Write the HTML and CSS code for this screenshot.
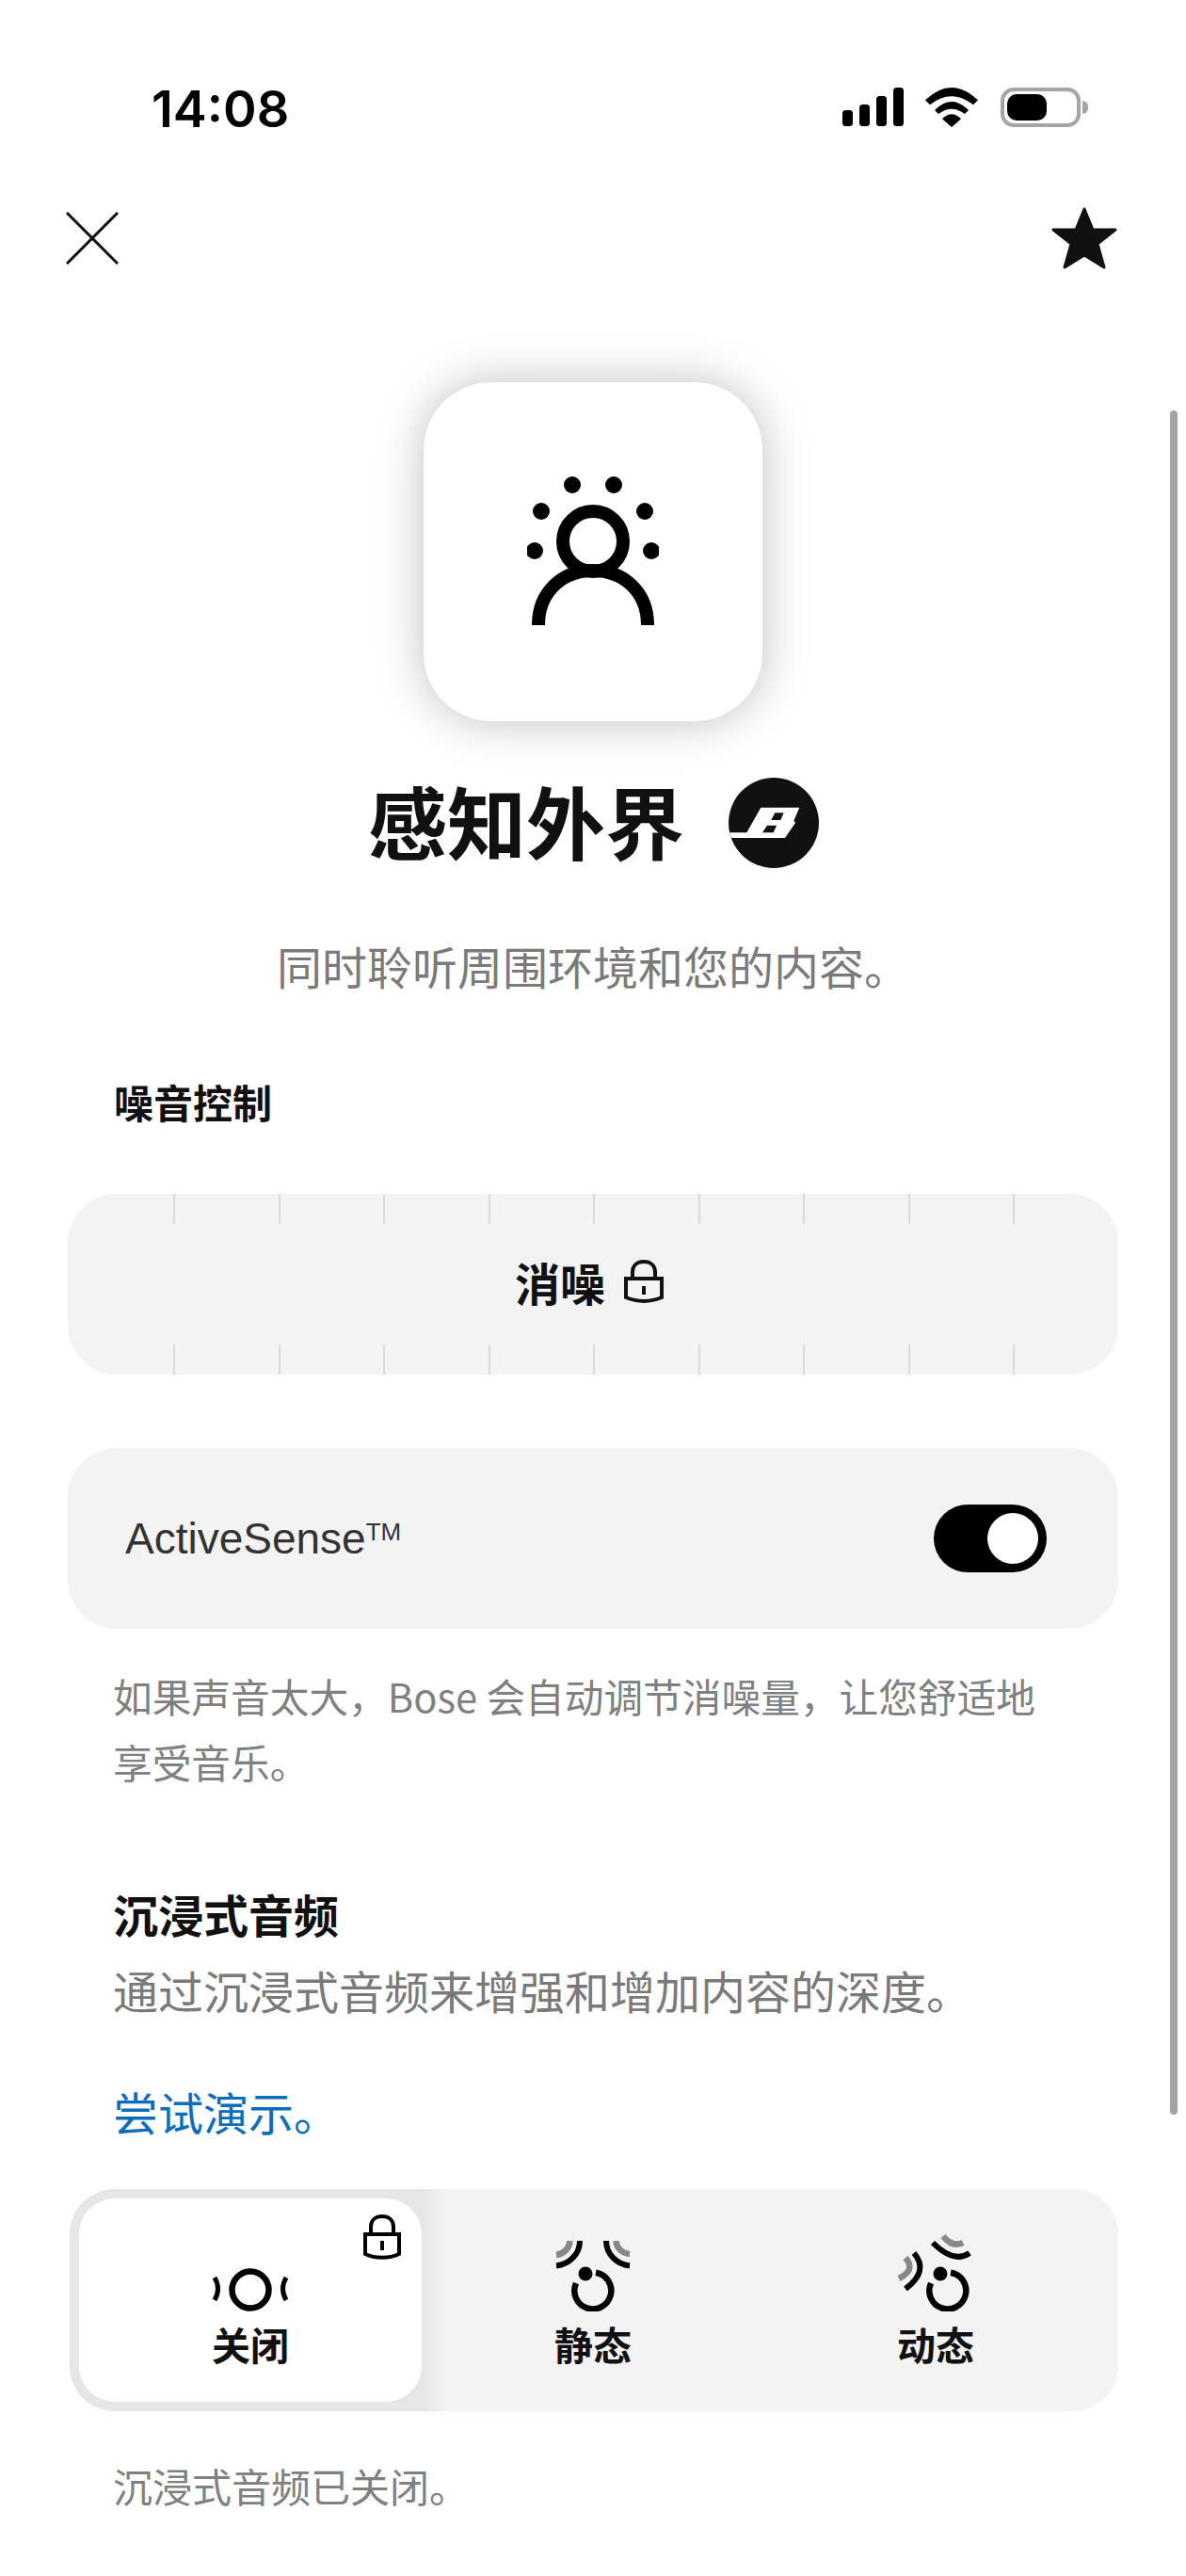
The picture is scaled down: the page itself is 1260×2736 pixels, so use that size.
FILE: index.html
```html
<!DOCTYPE html>
<html lang="zh-CN">
<head>
  <meta charset="UTF-8">
  <meta name="viewport" content="width=device-width, initial-scale=1.0">
  <title>感知外界</title>
  <link rel="stylesheet" href="styles.css">
</head>
<body>
  <div class="screen">
    <div class="status-bar">
      <span class="time">14:08</span>
      <div class="status-icons">
        <svg class="signal" width="65" height="42" viewBox="0 0 65 42">
          <rect x="0" y="24" width="11" height="17" rx="3.5"/>
          <rect x="18" y="18" width="11" height="23" rx="3.5"/>
          <rect x="36" y="9" width="11" height="32" rx="3.5"/>
          <rect x="54" y="0" width="11" height="41" rx="3.5"/>
        </svg>
        <svg class="wifi" width="56" height="42" viewBox="0 0 56 42">
          <path d="M0 13.3 Q28 -13.3 56 13.3 L51 18.3 Q28 0.3 5 18.3 Z"/>
          <path d="M10 24 Q28 6 46 24 L42 28 Q28 17.4 14 28 Z"/>
          <path d="M18 33.3 Q28 23.3 38 33.3 L28 42 Z"/>
        </svg>
        <div class="battery"><div class="battery-fill"></div></div>
        <div class="battery-nub"></div>
      </div>
    </div>

    <div class="nav">
      <svg width="56" height="56" viewBox="0 0 56 56">
        <path d="M1 1 L55 55 M55 1 L1 55" stroke="#111" stroke-width="3" fill="none"/>
      </svg>
      <svg width="70" height="66" viewBox="0 0 70 66">
        <path d="M35 2 L44 24 L68 24 L49 39 L56 64 L35 51 L14 64 L21 39 L2 24 L26 24 Z" fill="#111" stroke="#111" stroke-width="3" stroke-linejoin="round"/>
      </svg>
    </div>

    <div class="tile">
      <svg width="140" height="170" viewBox="0 0 140 170">
        <circle cx="48" cy="9" r="9"/>
        <circle cx="92" cy="9" r="9"/>
        <circle cx="15" cy="37" r="9"/>
        <circle cx="125" cy="37" r="9"/>
        <circle cx="8" cy="79" r="9"/>
        <circle cx="132" cy="79" r="9"/>
        <circle cx="70" cy="69" r="32" fill="none" stroke="#000" stroke-width="14"/>
        <path d="M12 158 C12 122 38 100 70 100 C102 100 128 122 128 158" fill="none" stroke="#000" stroke-width="14"/>
      </svg>
    </div>

    <div class="title-row">
      <h1>感知外界</h1>
      <svg class="bose-logo" width="96" height="96" viewBox="0 0 96 96">
        <circle cx="48" cy="48" r="48" fill="#111"/>
        <path d="M34.3 31.7 L75.3 31.7 L69.3 45.7 L71 48 L60 64 L3 64 L1 58.3 L19.3 58.3 Z M49.3 37.3 L45.3 45 L55.3 45 L58.7 37.3 Z M41 50.7 L36 58.3 L47.7 58.3 L51 50.7 Z" fill="#fff" fill-rule="evenodd"/>
      </svg>
    </div>
    <p class="subtitle">同时聆听周围环境和您的内容。</p>

    <h2 class="section-label">噪音控制</h2>
    <div class="panel noise-panel">
      <div class="ticks">
        <i></i><i></i><i></i><i></i><i></i><i></i><i></i><i></i><i></i>
      </div>
      <div class="noise-name">
        <span>消噪</span>
        <svg class="lock" width="42" height="46" viewBox="0 0 42 46">
          <path d="M9 20 V13 C9 6 14 2 21 2 C28 2 33 6 33 13 V20" fill="none" stroke="#111" stroke-width="4"/>
          <path d="M2 20 H40 V40 C28 45 14 45 2 40 Z" fill="none" stroke="#111" stroke-width="4"/>
          <rect x="19" y="28" width="4" height="9" fill="#111"/>
        </svg>
      </div>
      <div class="ticks">
        <i></i><i></i><i></i><i></i><i></i><i></i><i></i><i></i><i></i>
      </div>
    </div>

    <div class="panel sense-panel">
      <span class="sense-name">ActiveSense<sup>TM</sup></span>
      <div class="toggle"><div class="knob"></div></div>
    </div>
    <p class="note sense-note">如果声音太大，Bose 会自动调节消噪量，让您舒适地享受音乐。</p>

    <h3 class="audio-title">沉浸式音频</h3>
    <p class="audio-desc">通过沉浸式音频来增强和增加内容的深度。</p>
    <a class="demo-link">尝试演示。</a>

    <div class="segment">
      <div class="seg-item active">
        <svg class="lock seg-lock" width="40" height="48" viewBox="0 0 40 48">
          <path d="M8 20 V13 C8 6 13 2 20 2 C27 2 32 6 32 13 V20" fill="none" stroke="#000" stroke-width="4"/>
          <path d="M2 21 H38 V42 C28 47 12 47 2 42 Z" fill="none" stroke="#000" stroke-width="4"/>
          <rect x="18" y="28" width="4" height="10" fill="#000"/>
        </svg>
        <svg class="seg-icon" width="82" height="46" viewBox="0 0 82 46">
          <circle cx="41" cy="23" r="19.5" fill="none" stroke="#000" stroke-width="6.5"/>
          <path d="M3 10 Q10 22 3 34 M79 10 Q72 22 79 34" fill="none" stroke="#000" stroke-width="5"/>
        </svg>
        <span>关闭</span>
      </div>
      <div class="seg-item">
        <svg class="seg-icon" width="82" height="75" viewBox="0 0 82 75">
          <path d="M2 15 C10 14 16 8 16.5 0" fill="none" stroke="#888" stroke-width="6.5"/>
          <path d="M2 26.5 C16 25 27 14 27 0" fill="none" stroke="#000" stroke-width="6"/>
          <path d="M80 14 C72 13 66 8 65.5 0" fill="none" stroke="#888" stroke-width="6.5"/>
          <path d="M80 26.5 C66 25 55 14 55 0" fill="none" stroke="#000" stroke-width="6"/>
          <circle cx="33" cy="35" r="7.5"/>
          <path d="M44 33.7 A19.5 19.5 0 1 1 23 45" fill="none" stroke="#000" stroke-width="6.5"/>
        </svg>
        <span>静态</span>
      </div>
      <div class="seg-item">
        <svg class="seg-icon" width="82" height="82" viewBox="0 0 82 82">
          <path d="M49 2 Q58.5 14.5 70 9" fill="none" stroke="#888" stroke-width="6.5"/>
          <path d="M38 9 Q60.5 31.5 77 20" fill="none" stroke="#000" stroke-width="6"/>
          <path d="M9 25 Q20.5 38 2 47" fill="none" stroke="#888" stroke-width="6.5"/>
          <path d="M18 20 Q34.5 39 9 58" fill="none" stroke="#000" stroke-width="6"/>
          <circle cx="46" cy="42" r="7.5"/>
          <path d="M57 40.7 A19.5 19.5 0 1 1 36 52" fill="none" stroke="#000" stroke-width="6.5"/>
        </svg>
        <span>动态</span>
      </div>
    </div>
    <p class="note off-note">沉浸式音频已关闭。</p>

    <div class="scrollbar"></div>
  </div>
</body>
</html>
```

FILE: styles.css
```css
* {
  box-sizing: border-box;
}
html, body {
  margin: 0;
  padding: 0;
  background-color: #ffffff;
}
body {
  font-family: "Liberation Sans", "Noto Sans CJK SC", sans-serif;
  color: #111111;
}
h1, h2, h3, p {
  margin: 0;
  font-family: "Noto Sans CJK SC", sans-serif;
}
.screen {
  position: relative;
  width: 1260px;
  height: 2736px;
  overflow: hidden;
  background-color: #ffffff;
}

/* status bar */
.status-bar {
  display: flex;
  justify-content: space-between;
  align-items: center;
  height: 42px;
  margin-top: 93px;
  padding: 0 104px 0 161px;
}
.time {
  padding-top: 3px;
  font-family: "Inter", sans-serif;
  font-size: 54px;
  font-weight: 600;
  line-height: 42px;
  color: #000;
}
.status-icons {
  display: flex;
  align-items: center;
}
.wifi {
  margin-left: 23px;
}
.battery {
  width: 85px;
  height: 42px;
  margin-left: 24px;
  padding: 3px;
  border: 4px solid #a5a5a5;
  border-radius: 14px;
}
.battery-fill {
  width: 42px;
  height: 100%;
  background-color: #000;
  border-radius: 10px;
}
.battery-nub {
  width: 6px;
  height: 14px;
  margin-left: 2px;
  background-color: #a5a5a5;
  border-radius: 0 7px 7px 0;
}

/* close / favourite */
.nav {
  display: flex;
  justify-content: space-between;
  align-items: center;
  margin-top: 85px;
  padding: 0 73px 0 70px;
}

/* mode tile */
.tile {
  display: flex;
  align-items: center;
  justify-content: center;
  width: 360px;
  height: 360px;
  margin: 120px auto 0 450px;
  background-color: #fff;
  border-radius: 72px;
  box-shadow: 0 0 50px rgba(0, 0, 0, 0.25);
}
.tile svg {
  margin-top: 10px;
}
.title-row {
  display: flex;
  align-items: center;
  height: 96px;
  margin-top: 57px;
  padding-left: 391px;
}
h1 {
  font-size: 84px;
  font-weight: 700;
  line-height: 96px;
  color: #111;
}
.bose-logo {
  margin: 5px 0 0 47px;
}
.subtitle {
  margin-top: 71px;
  font-size: 48px;
  line-height: 70px;
  text-align: center;
  color: #7a7a7a;
}
.section-label {
  margin: 80px 0 0 121px;
  font-size: 42px;
  font-weight: 700;
  line-height: 60px;
}

/* grey cards */
.panel {
  width: 1116px;
  height: 192px;
  margin-left: 72px;
  background-color: #f3f3f3;
  border-radius: 52px;
}
.noise-panel {
  display: flex;
  flex-direction: column;
  justify-content: space-between;
  margin-top: 68px;
}
.ticks {
  display: flex;
  gap: 109.5px;
  height: 32px;
  padding-left: 112px;
}
.ticks i {
  width: 2px;
  background-color: #dadada;
}
.noise-name {
  display: flex;
  align-items: center;
  padding: 0 0 6px 475px;
  font-family: "Noto Sans CJK SC", sans-serif;
  font-size: 48px;
  font-weight: 700;
  line-height: 60px;
}
.noise-name .lock {
  margin-left: 20px;
}
.sense-panel {
  display: flex;
  align-items: center;
  justify-content: space-between;
  margin-top: 78px;
  padding: 0 76px 0 61px;
}
.sense-name {
  font-size: 46px;
  color: #333;
}
.sense-name sup {
  font-size: 26px;
  vertical-align: 14px;
  line-height: 0;
}
.toggle {
  display: flex;
  justify-content: flex-end;
  width: 120px;
  height: 72px;
  padding: 9px;
  background-color: #000;
  border-radius: 36px;
}
.knob {
  width: 54px;
  height: 54px;
  background-color: #fff;
  border-radius: 50%;
}
.note {
  margin-left: 120px;
  font-size: 42px;
  line-height: 70px;
  color: #808080;
}
.sense-note {
  width: 990px;
  margin-top: 36px;
  font-size: 41.7px;
}
.audio-title {
  margin: 91px 0 0 120px;
  font-size: 48px;
  font-weight: 700;
  line-height: 70px;
}
.audio-desc {
  margin: 11px 0 0 120px;
  font-size: 48px;
  line-height: 70px;
  color: #7a7a7a;
}
.demo-link {
  display: block;
  margin: 59px 0 0 120px;
  font-family: "Noto Sans CJK SC", sans-serif;
  font-size: 48px;
  line-height: 70px;
  color: #0a6ebd;
}

/* immersive audio selector; the darker left end of the track rings the selected item */
.segment {
  display: grid;
  grid-template-columns: 374px 344px 384px;
  width: 1114px;
  height: 236px;
  margin: 48px 0 0 74px;
  padding: 10px 0 10px 10px;
  background: linear-gradient(90deg, #e6e6e6 376px, #f3f3f3 400px);
  border-radius: 48px;
}
.seg-item {
  position: relative;
  display: flex;
  flex-direction: column;
  align-items: center;
  justify-content: flex-end;
  padding-bottom: 39px;
  font-family: "Noto Sans CJK SC", sans-serif;
  font-size: 41px;
  font-weight: 700;
  line-height: 46px;
}
.seg-item.active {
  width: 364px;
  background-color: #fff;
  border-radius: 38px;
}
.seg-lock {
  position: absolute;
  top: 17px;
  right: 22px;
}
.seg-icon {
  margin-bottom: 11px;
}
.off-note {
  margin-top: 44px;
}

/* overlay scroll indicator */
.scrollbar {
  position: absolute;
  top: 436px;
  right: 9px;
  width: 8px;
  height: 1810px;
  background-color: #a3a3a3;
  border-radius: 4px;
}
```
